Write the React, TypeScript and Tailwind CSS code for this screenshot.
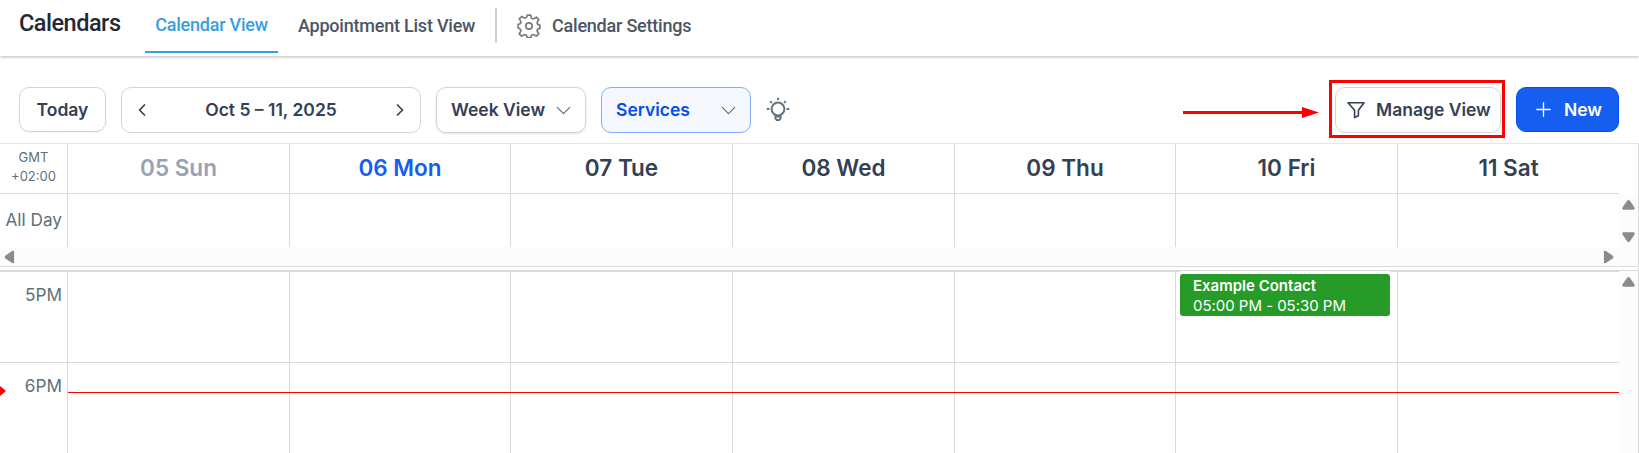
import type { ReactNode } from "react";
import { ChevronDown, ChevronLeft, ChevronRight, Plus } from "lucide-react";

const days = [
  { label: "05 Sun", color: "text-[#98a2b3]" },
  { label: "06 Mon", color: "text-[#155eef]" },
  { label: "07 Tue", color: "text-[#344054]" },
  { label: "08 Wed", color: "text-[#344054]" },
  { label: "09 Thu", color: "text-[#344054]" },
  { label: "10 Fri", color: "text-[#344054]" },
  { label: "11 Sat", color: "text-[#344054]" },
];

function GearIcon() {
  return (
    <svg width="24" height="24" viewBox="0 0 24 24" fill="none" stroke="#7b7b7b" strokeWidth="1.7" strokeLinejoin="round">
      <circle cx="12" cy="12" r="3.2" />
      <path d="M10.3 1.2h3.4l.5 2.4q1.2 1.9 3.2.9l2-1.3 2.4 2.4-1.3 2q-1 2 .9 3.1l1.5.3v3.4l-1.5.3q-1.9 1.1-.9 3.1l1.3 2-2.4 2.4-2-1.3q-2-1-3.2.9l-.5 1.9h-3.4l-.5-1.9q-1.2-1.9-3.2-.9l-2 1.3-2.4-2.4 1.3-2q1-2-.9-3.1L1.1 13.7v-3.4l1.5-.3q1.9-1.1.9-3.1l-1.3-2 2.4-2.4 2 1.3q2 1 3.2-.9z" />
    </svg>
  );
}

function BulbIcon() {
  return (
    <svg width="24" height="24" viewBox="0 0 24 24" fill="none" stroke="#5f7480" strokeWidth="2">
      <circle cx="12" cy="12" r="6.4" />
      <path d="M9.4 18v3.4l1.3 1.5h2.6l1.3-1.5V18M9.4 19.4h5.2M12 .8v2.3M.8 12h2.6M20.6 12h2.6M4.2 4.2l1.7 1.7M19.8 4.2l-1.7 1.7" />
    </svg>
  );
}

function FilterIcon() {
  return (
    <svg width="18" height="18" viewBox="0 0 18 18" fill="none" stroke="#344054" strokeWidth="1.6" strokeLinejoin="round">
      <path d="M1 1.8h16l-5.6 7.4v5.6l-3.8 1.8V9.2L1 1.8z" />
    </svg>
  );
}

function ScrollArrow({ className = "" }: { className?: string }) {
  return (
    <svg width="13" height="10" viewBox="0 0 13 10" fill="#8b8b8b" className={className}>
      <path d="M5.3.6Q6.5-.5 7.7.6L12.5 7.6Q13.2 9.6 11.5 9.7H1.5Q-.2 9.6.5 7.6z" />
    </svg>
  );
}

function DayCells({ children }: { children?: (index: number) => ReactNode }) {
  return (
    <div className="grid w-[1551px] flex-none grid-cols-[222px_221px_222px_222px_221px_222px_221px]">
      {days.map((day, i) => (
        <div key={day.label} className="relative border-r border-[#dadada] last:border-r-0">
          {children?.(i)}
        </div>
      ))}
    </div>
  );
}

function TimeLabel({ children }: { children: ReactNode }) {
  return (
    <div className="w-[68px] flex-none border-r border-[#dadada] pr-[5px] text-right text-[17.2px] leading-[22px] text-[#607179]">
      {children}
    </div>
  );
}

export default function App() {
  return (
    <div className="flex h-[453px] w-[1639px] flex-col overflow-hidden bg-white font-['Inter',sans-serif]">
      <header className="relative z-10 flex h-14 flex-none items-start bg-white pl-[19px] font-['Roboto',sans-serif] text-[18px] font-medium tracking-[-0.22px] text-[#4b5563] shadow-[0_1px_3px_rgba(0,0,0,0.28)]">
        <h1 className="w-[126px] pt-[9px] text-[23.5px] leading-7 tracking-[-0.5px] text-[#1f2937]">Calendars</h1>
        <div className="flex h-[53px] w-[133px] justify-center border-b-2 border-[#38a0db] pt-[14px] leading-[22px] text-[#38a0db]">
          Calendar View
        </div>
        <div className="ml-5 w-[197px] pt-[15px] leading-[22px] whitespace-nowrap">Appointment List View</div>
        <div className="mt-2 h-[35px] w-[2px] bg-[#d0d1d5]" />
        <div className="mt-[14px] ml-5">
          <GearIcon />
        </div>
        <div className="ml-[11px] pt-[15px] leading-[22px]">Calendar Settings</div>
      </header>

      <div className="flex h-[87px] flex-none items-start pt-[31px] pr-5 pl-[19px] text-[17.5px] font-semibold text-[#344054]">
        <button className="h-[45px] w-[87px] rounded-[10px] border border-[#d0d5dd] pt-px shadow-xs">Today</button>
        <div className="ml-[15px] flex h-[46px] w-[300px] items-center justify-between rounded-[10px] border border-[#d0d5dd] px-[10px]">
          <ChevronLeft size={20} strokeWidth={2} />
          <span className="pt-px">Oct 5 – 11, 2025</span>
          <ChevronRight size={20} strokeWidth={2} />
        </div>
        <button className="ml-[15px] flex h-[46px] w-[150px] items-center justify-between rounded-[10px] border border-[#d0d5dd] pr-[9px] pl-[14px] whitespace-nowrap shadow-sm">
          <span className="pt-px">Week View</span>
          <ChevronDown size={25} strokeWidth={1.1} color="#5d6779" />
        </button>
        <button className="ml-[15px] flex h-[46px] w-[150px] items-center justify-between rounded-[10px] border border-[#84adff] bg-[#f5f8ff] pr-[9px] pl-[14px] text-[#004eeb]">
          <span className="pt-px">Services</span>
          <ChevronDown size={25} strokeWidth={1.1} color="#5d6779" />
        </button>
        <div className="mt-[10px] ml-[15px]">
          <BulbIcon />
        </div>
        <svg width="136" height="12" viewBox="0 0 136 12" fill="#ff0000" className="mt-5 ml-auto flex-none">
          <path d="M0 4h119V0l17 5.5L119 11V7H0z" />
        </svg>
        <div className="-mt-[7px] ml-[10px] h-[58px] w-[176px] border-3 border-[#ff0000] px-[3px] pt-1">
          <button className="flex h-[46px] w-[166px] items-center rounded-[10px] border border-[#d0d5dd] pl-[11px] whitespace-nowrap">
            <FilterIcon />
            <span className="ml-[11px] pt-px">Manage View</span>
          </button>
        </div>
        <button className="ml-[11px] flex h-[45px] w-[103px] items-center rounded-[10px] border border-[#004eeb] bg-[#155eef] pl-[15px] text-white">
          <Plus size={23} strokeWidth={1.4} />
          <span className="ml-[9px] pt-px">New</span>
        </button>
      </div>

      <div className="flex flex-1 flex-col border-t border-r border-t-[#e6e6e6] border-r-[#dadada]">
        <div className="flex h-[50px] flex-none">
          <div className="w-[68px] flex-none border-r border-b border-[#dadada] pt-1 text-center text-[13px] leading-[19px] text-[#607179]">
            GMT
            <br />
            +02:00
          </div>
          <div className="flex border-b border-[#dadada] text-[22.5px] font-semibold">
            <DayCells>
              {(i) => (
                <div className={`flex h-[49px] items-center justify-center pb-px ${days[i].color}`}>{days[i].label}</div>
              )}
            </DayCells>
          </div>
        </div>

        <div className="flex h-[53px] flex-none">
          <TimeLabel>
            <div className="pt-[15px]">All Day</div>
          </TimeLabel>
          <DayCells />
          <div className="flex flex-1 flex-col items-center justify-between bg-[#fcfcfc] pt-[6px] pb-[5px]">
            <ScrollArrow />
            <ScrollArrow className="rotate-180" />
          </div>
        </div>
        <div className="flex h-[19px] flex-none items-center justify-between bg-[#fcfcfc] pr-[23px] pl-[3px]">
          <ScrollArrow className="-rotate-90" />
          <ScrollArrow className="rotate-90" />
        </div>
        <div className="h-1 flex-none border-t border-[#dadada]" />

        <div className="flex flex-1 border-t border-[#dadada]">
          <div className="relative w-[1619px] border-t border-[#dadada]">
            <div className="flex h-[91px] border-b border-[#dadada]">
              <TimeLabel>
                <div className="pt-3">5PM</div>
              </TimeLabel>
              <DayCells>
                {(i) =>
                  i === 5 && (
                    <div className="absolute -top-px left-1 w-[210px] border-t-3 border-white">
                      <div className="h-[42px] rounded-[3px] bg-[#279b27] pt-[2px] pl-[13px] text-[15px] leading-5 text-white">
                        <div className="font-semibold">Example Contact</div>
                        <div className="tracking-[-0.03px]">05:00 PM - 05:30 PM</div>
                      </div>
                    </div>
                  )
                }
              </DayCells>
            </div>
            <div className="flex h-[90px]">
              <TimeLabel>
                <div className="pt-3">6PM</div>
              </TimeLabel>
              <DayCells />
            </div>
            {/* current time */}
            <div className="absolute top-[120px] right-0 left-[68px] h-px bg-[#ff0000]" />
            <svg width="6" height="10" viewBox="0 0 6 10" fill="#ff0000" className="absolute top-[114px] left-0">
              <path d="M0 0l6 5-6 5z" />
            </svg>
          </div>
          <div className="flex flex-1 justify-center bg-[#fcfcfc] pt-[6px]">
            <ScrollArrow />
          </div>
        </div>
      </div>
    </div>
  );
}
